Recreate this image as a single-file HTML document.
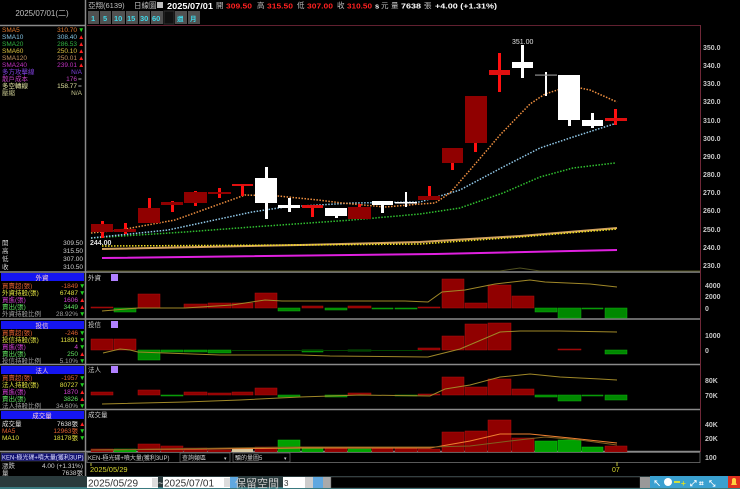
<!DOCTYPE html>
<html><head><meta charset="utf-8"><style>
html,body{margin:0;padding:0;background:#000;width:740px;height:489px;overflow:hidden}
svg{display:block}
text{font-family:"Liberation Sans","Noto Sans CJK TC",sans-serif}
</style></head><body>
<svg width="740" height="489" viewBox="0 0 740 489" xmlns="http://www.w3.org/2000/svg">
<rect width="740" height="489" fill="#000"/>
<line x1="85.5" y1="0" x2="85.5" y2="476" stroke="#8a8a8a" stroke-width="1.5"/>
<line x1="0" y1="25.5" x2="85" y2="25.5" stroke="#8a8a8a" stroke-width="1.5"/>
<text x="42" y="16" font-size="8" fill="#c0c0c0" text-anchor="middle">2025/07/01(二)</text>
<g font-size="6.5">
<text x="2" y="32" fill="#e07a30">SMA5</text><text x="77" y="32" fill="#e07a30" text-anchor="end">310.70</text><text x="78" y="32" fill="#20d020">▼</text>
<text x="2" y="39" fill="#80c0e0">SMA10</text><text x="77" y="39" fill="#80c0e0" text-anchor="end">308.40</text><text x="78" y="39" fill="#ff2020">▲</text>
<text x="2" y="46" fill="#30b040">SMA20</text><text x="77" y="46" fill="#30b040" text-anchor="end">286.53</text><text x="78" y="46" fill="#ff2020">▲</text>
<text x="2" y="53" fill="#d8c040">SMA60</text><text x="77" y="53" fill="#d8c040" text-anchor="end">250.10</text><text x="78" y="53" fill="#ff2020">▲</text>
<text x="2" y="60" fill="#c09060">SMA120</text><text x="77" y="60" fill="#c09060" text-anchor="end">250.01</text><text x="78" y="60" fill="#ff2020">▲</text>
<text x="2" y="67" fill="#c030c0">SMA240</text><text x="77" y="67" fill="#c030c0" text-anchor="end">239.01</text><text x="78" y="67" fill="#ff2020">▲</text>
<text x="2" y="74" fill="#8040e0">多方攻擊線</text><text x="82" y="74" fill="#8040e0" text-anchor="end">N/A</text>
<text x="2" y="81" fill="#c040c0">散戶成本</text><text x="77" y="81" fill="#c040c0" text-anchor="end">176</text><text x="78" y="81" fill="#aaa">=</text>
<text x="2" y="88" fill="#e0e0a0">多空轉線</text><text x="77" y="88" fill="#e0e0a0" text-anchor="end">158.77</text><text x="78" y="88" fill="#aaa">=</text>
<text x="2" y="95" fill="#c8c890">壓縮</text><text x="82" y="95" fill="#c8c890" text-anchor="end">N/A</text>
</g>
<g font-size="6.5" fill="#d0d0d0">
<text x="2" y="245">開</text><text x="83" y="245" text-anchor="end">309.50</text>
<text x="2" y="253">高</text><text x="83" y="253" text-anchor="end">315.50</text>
<text x="2" y="261">低</text><text x="83" y="261" text-anchor="end">307.00</text>
<text x="2" y="269">收</text><text x="83" y="269" text-anchor="end">310.50</text>
</g>
<g stroke="#8a8a8a" stroke-width="1.5">
<line x1="0" y1="272" x2="700" y2="272"/><line x1="0" y1="319" x2="700" y2="319"/>
<line x1="0" y1="364.5" x2="700" y2="364.5"/><line x1="0" y1="409.5" x2="700" y2="409.5"/>
<line x1="0" y1="451.5" x2="700" y2="451.5"/>
</g>
<g font-size="6.5">
<rect x="1" y="273" width="83" height="8" fill="#1515f0"/><text x="42" y="280" fill="#ffd0d0" text-anchor="middle">外資</text>
<text x="2" y="288" fill="#e06030">買賣超(張)</text><text x="78" y="288" fill="#e06030" text-anchor="end">-1849</text><text x="79" y="288" fill="#20d020">▼</text>
<text x="2" y="295" fill="#e0e040">外資持股(張)</text><text x="78" y="295" fill="#e0e040" text-anchor="end">67487</text><text x="79" y="295" fill="#20d020">▼</text>
<text x="2" y="302" fill="#d040d0">買進(張)</text><text x="78" y="302" fill="#d040d0" text-anchor="end">1606</text><text x="79" y="302" fill="#ff2020">▲</text>
<text x="2" y="309" fill="#60e060">賣出(張)</text><text x="78" y="309" fill="#60e060" text-anchor="end">3449</text><text x="79" y="309" fill="#ff2020">▲</text>
<text x="2" y="316" fill="#a0a0a0">外資持股比例</text><text x="78" y="316" fill="#a0a0a0" text-anchor="end">28.92%</text><text x="79" y="316" fill="#20d020">▼</text>
<rect x="1" y="321" width="83" height="8" fill="#1515f0"/><text x="42" y="328" fill="#ffd0d0" text-anchor="middle">投信</text>
<text x="2" y="335" fill="#e06030">買賣超(張)</text><text x="78" y="335" fill="#e06030" text-anchor="end">-246</text><text x="79" y="335" fill="#20d020">▼</text>
<text x="2" y="342" fill="#e0e040">投信持股(張)</text><text x="78" y="342" fill="#e0e040" text-anchor="end">11891</text><text x="79" y="342" fill="#20d020">▼</text>
<text x="2" y="349" fill="#d040d0">買進(張)</text><text x="78" y="349" fill="#d040d0" text-anchor="end">4</text><text x="79" y="349" fill="#20d020">▼</text>
<text x="2" y="356" fill="#60e060">賣出(張)</text><text x="78" y="356" fill="#60e060" text-anchor="end">250</text><text x="79" y="356" fill="#ff2020">▲</text>
<text x="2" y="363" fill="#a0a0a0">投信持股比例</text><text x="78" y="363" fill="#a0a0a0" text-anchor="end">5.10%</text><text x="79" y="363" fill="#20d020">▼</text>
<rect x="1" y="366" width="83" height="8" fill="#1515f0"/><text x="42" y="373" fill="#ffd0d0" text-anchor="middle">法人</text>
<text x="2" y="380" fill="#e06030">買賣超(張)</text><text x="78" y="380" fill="#e06030" text-anchor="end">-1957</text><text x="79" y="380" fill="#20d020">▼</text>
<text x="2" y="387" fill="#e0e040">法人持股(張)</text><text x="78" y="387" fill="#e0e040" text-anchor="end">80727</text><text x="79" y="387" fill="#20d020">▼</text>
<text x="2" y="394" fill="#d040d0">買進(張)</text><text x="78" y="394" fill="#d040d0" text-anchor="end">1870</text><text x="79" y="394" fill="#ff2020">▲</text>
<text x="2" y="401" fill="#60e060">賣出(張)</text><text x="78" y="401" fill="#60e060" text-anchor="end">3826</text><text x="79" y="401" fill="#ff2020">▲</text>
<text x="2" y="408" fill="#a0a0a0">法人持股比例</text><text x="78" y="408" fill="#a0a0a0" text-anchor="end">34.60%</text><text x="79" y="408" fill="#20d020">▼</text>
<rect x="1" y="411" width="83" height="8" fill="#1515f0"/><text x="42" y="418" fill="#ffd0d0" text-anchor="middle">成交量</text>
<text x="2" y="426" fill="#e0e0e0">成交量</text><text x="78" y="426" fill="#e0e0e0" text-anchor="end">7638張</text><text x="79" y="426" fill="#ff2020">▲</text>
<text x="2" y="433" fill="#e06030">MA5</text><text x="78" y="433" fill="#e06030" text-anchor="end">12963張</text><text x="79" y="433" fill="#20d020">▼</text>
<text x="2" y="440" fill="#e0e040">MA10</text><text x="78" y="440" fill="#e0e040" text-anchor="end">18178張</text><text x="79" y="440" fill="#20d020">▼</text>
<rect x="1" y="453" width="83" height="8" fill="#101070" stroke="#606060" stroke-width="0.5"/><text x="2" y="459.5" fill="#e0e0ff" font-size="6">KEN-極光碟+噴大量(獲利3UP)</text>
<text x="2" y="468" fill="#d0d0d0">漲跌</text><text x="83" y="468" fill="#d0d0d0" text-anchor="end">4.00 (+1.31%)</text>
<text x="2" y="475" fill="#d0d0d0">量</text><text x="83" y="475" fill="#d0d0d0" text-anchor="end">7638張</text>
</g>
<g font-size="7.5">
<text x="88" y="8" fill="#c0c0c0">亞翔(6139)</text>
<text x="134" y="8" fill="#c0c0c0">日線圖</text>
<rect x="157" y="2" width="6" height="6" fill="#c0c0c0"/>
<text x="167" y="9" fill="#fff" font-weight="bold" font-size="8.5" textLength="46" lengthAdjust="spacingAndGlyphs">2025/07/01</text>
<text x="216" y="8" fill="#c0c0c0">開</text><text x="226" y="8.5" fill="#ff2020" font-weight="bold" textLength="26" lengthAdjust="spacingAndGlyphs">309.50</text>
<text x="257" y="8" fill="#c0c0c0">高</text><text x="267" y="8.5" fill="#ff2020" font-weight="bold" textLength="26" lengthAdjust="spacingAndGlyphs">315.50</text>
<text x="297" y="8" fill="#c0c0c0">低</text><text x="307" y="8.5" fill="#ff2020" font-weight="bold" textLength="26" lengthAdjust="spacingAndGlyphs">307.00</text>
<text x="337" y="8" fill="#c0c0c0">收</text><text x="347" y="8.5" fill="#ff2020" font-weight="bold" textLength="25" lengthAdjust="spacingAndGlyphs">310.50</text>
<text x="375" y="8.5" fill="#fff" font-weight="bold">s</text><text x="381" y="8" fill="#c0c0c0">元</text>
<text x="391" y="8" fill="#c0c0c0">量</text><text x="401" y="8.5" fill="#fff" font-weight="bold" textLength="20" lengthAdjust="spacingAndGlyphs">7638</text><text x="424" y="8" fill="#c0c0c0">張</text>
<text x="435" y="8.5" fill="#fff" font-weight="bold" textLength="62" lengthAdjust="spacingAndGlyphs">+4.00 (+1.31%)</text>
</g>
<g font-size="7.5" fill="#40d8e8" font-weight="bold">
<rect x="88" y="11" width="11" height="13" fill="#505050"/><text x="91" y="21">1</text>
<rect x="100" y="11" width="11" height="13" fill="#505050"/><text x="103" y="21">5</text>
<rect x="112" y="11" width="13" height="13" fill="#505050"/><text x="114" y="21">10</text>
<rect x="126" y="11" width="12" height="13" fill="#505050"/><text x="127" y="21">15</text>
<rect x="139" y="11" width="11" height="13" fill="#505050"/><text x="140" y="21">30</text>
<rect x="151" y="11" width="12" height="13" fill="#505050"/><text x="152" y="21">60</text>
<rect x="164" y="11" width="10" height="13" fill="#101010" stroke="#303030"/>
<rect x="175" y="11" width="12" height="13" fill="#505050"/><text x="177" y="21" font-size="6.5">週</text>
<rect x="188" y="11" width="12" height="13" fill="#505050"/><text x="190" y="21" font-size="6.5">月</text>
</g>
<line x1="87" y1="25.5" x2="700" y2="25.5" stroke="#602030"/>
<line x1="700.5" y1="25" x2="700.5" y2="452" stroke="#702838"/>
<g font-size="7" fill="#c8c8c8" font-weight="bold">
<text x="703" y="50">350.0</text><text x="703" y="68">340.0</text><text x="703" y="86">330.0</text><text x="703" y="104">320.0</text><text x="703" y="123">310.0</text><text x="703" y="141">300.0</text><text x="703" y="159">290.0</text><text x="703" y="177">280.0</text><text x="703" y="195">270.0</text><text x="703" y="213">260.0</text><text x="703" y="232">250.0</text><text x="703" y="250">240.0</text><text x="703" y="268">230.0</text>
<text x="705" y="288">4000</text><text x="705" y="299">2000</text><text x="705" y="311">0</text>
<text x="705" y="338">1000</text><text x="705" y="353">0</text>
<text x="705" y="383">80K</text><text x="705" y="398">70K</text>
<text x="705" y="427">40K</text><text x="705" y="441">20K</text><text x="705" y="460">100</text>
</g>
<g fill="none">
<polyline points="102,258 435,254 617,250" stroke="#e020e0" stroke-width="2"/>
<polyline points="102,249 300,245 420,242 520,236 617,228" stroke="#d0a060" stroke-width="2"/>
<polyline points="102,246 300,245 420,244 520,237 617,229" stroke="#f0e020" stroke-width="1.5" stroke-dasharray="1.5 1.5"/>
<polyline points="91,238 185,232 252,227 352,220 420,214 460,208 503,193 540,177 573,168 615,163" stroke="#30c030" stroke-width="1.5" stroke-dasharray="1.5 1.5"/>
<polyline points="91,238 168,230 252,212 285,207 352,203 420,202 460,190 503,167 540,148 570,138 617,123" stroke="#90c8e8" stroke-width="1.5" stroke-dasharray="1.5 1.5"/>
<polyline points="91,233 120,230 175,220 245,195 278,196 318,200 342,203 385,207 420,204 435,203 450,193 470,170 500,135 530,104 545,94 570,86 590,90 617,102" stroke="#f09040" stroke-width="1.5" stroke-dasharray="1.5 1.5"/>
<polyline points="87,271 500,271 520,268 540,271 700,271" stroke="#505020" stroke-width="1"/>
</g>
<text x="90" y="245" font-size="7" fill="#e0e0e0" font-weight="bold">244.00</text>
<text x="512" y="44" font-size="7" fill="#e0e0e0">351.00</text>
<g>
<g fill="#ff1010">
<rect x="101" y="221" width="3" height="17"/><rect x="124" y="223" width="3" height="11"/><rect x="148" y="198" width="3" height="25"/><rect x="171" y="201" width="3" height="11"/><rect x="194" y="191" width="3" height="15"/><rect x="218" y="188" width="3" height="10"/><rect x="241" y="184" width="3" height="12"/><rect x="311" y="205" width="3" height="12"/><rect x="358" y="204" width="3" height="15"/><rect x="428" y="186" width="3" height="14"/><rect x="451" y="148" width="3" height="22"/><rect x="474" y="96" width="3" height="56"/><rect x="498" y="53" width="3" height="39"/><rect x="614" y="109" width="3" height="16"/>
</g>
<g fill="#900000">
<rect x="91" y="224" width="22" height="8"/><rect x="114" y="229" width="22" height="3"/><rect x="138" y="208" width="22" height="15"/><rect x="161" y="202" width="22" height="3"/><rect x="184" y="192" width="23" height="11"/><rect x="208" y="192" width="23" height="2"/><rect x="348" y="207" width="23" height="12"/><rect x="418" y="196" width="22" height="4"/><rect x="442" y="148" width="21" height="15"/><rect x="465" y="96" width="22" height="47"/>
</g>
<g fill="#e01010"><rect x="232" y="184" width="21" height="2"/><rect x="302" y="205" width="21" height="3"/><rect x="489" y="70" width="21" height="5"/><rect x="605" y="118" width="22" height="3"/></g>
<g fill="#ffffff">
<rect x="265" y="167" width="3" height="52"/><rect x="255" y="178" width="22" height="25"/>
<rect x="288" y="198" width="3" height="14"/><rect x="278" y="205" width="22" height="3"/>
<rect x="335" y="208" width="3" height="10"/><rect x="325" y="208" width="22" height="8"/>
<rect x="381" y="201" width="3" height="12"/><rect x="372" y="201" width="21" height="4"/>
<rect x="405" y="192" width="2" height="15"/><rect x="395" y="202" width="22" height="1.5"/>
<rect x="521" y="45" width="3" height="33"/><rect x="512" y="62" width="21" height="6"/>
<rect x="545" y="72" width="2" height="24"/>
<rect x="568" y="75" width="3" height="51"/><rect x="558" y="75" width="22" height="45"/>
<rect x="591" y="113" width="3" height="15"/><rect x="582" y="120" width="21" height="6"/>
</g>
<rect x="535" y="74.5" width="22" height="1.2" fill="#909090"/>
</g>
<g font-size="6.5" fill="#d0d0d0">
<text x="88" y="280">外資</text><rect x="111" y="274" width="7" height="7" fill="#b080ff"/>
<text x="88" y="327">投信</text><rect x="111" y="321" width="7" height="7" fill="#b080ff"/>
<text x="88" y="372">法人</text><rect x="111" y="366" width="7" height="7" fill="#b080ff"/>
<text x="88" y="417">成交量</text>
</g>
<g fill="#900000" stroke="#b01010" stroke-width="0.5">
<rect x="91" y="307" width="22" height="1"/><rect x="138" y="294" width="22" height="14"/><rect x="184" y="304" width="23" height="4"/><rect x="208" y="303" width="23" height="5"/><rect x="232" y="303" width="21" height="5"/><rect x="255" y="293" width="22" height="15"/><rect x="302" y="306" width="21" height="2"/><rect x="348" y="306" width="23" height="2"/><rect x="418" y="307" width="22" height="1"/><rect x="442" y="279" width="22" height="29"/><rect x="465" y="303" width="22" height="5"/><rect x="488" y="285" width="23" height="23"/><rect x="512" y="296" width="22" height="12"/>
</g>
<g fill="#008800" stroke="#10b010" stroke-width="0.5">
<rect x="114" y="308" width="22" height="4"/><rect x="278" y="308" width="22" height="3"/><rect x="325" y="308" width="22" height="2"/><rect x="372" y="308" width="21" height="1"/><rect x="395" y="308" width="22" height="1"/><rect x="535" y="308" width="22" height="4"/><rect x="558" y="308" width="23" height="10"/><rect x="582" y="308" width="21" height="1"/><rect x="605" y="308" width="22" height="10"/>
</g>
<polyline fill="none" stroke="#a08828" stroke-width="1" points="102,311 138,308 185,308 232,305 265,300 282,301 405,301 428,302 442,292 465,290 495,284 530,280 545,282 590,284 617,287"/>
<g fill="#900000" stroke="#b01010" stroke-width="0.5">
<rect x="91" y="339" width="22" height="11"/><rect x="114" y="339" width="22" height="11"/><rect x="418" y="348" width="22" height="2"/><rect x="442" y="336" width="22" height="14"/><rect x="465" y="324" width="22" height="26"/><rect x="488" y="323" width="23" height="27"/><rect x="558" y="349" width="23" height="1"/>
</g>
<g fill="#008800" stroke="#10b010" stroke-width="0.5">
<rect x="138" y="350" width="22" height="10"/><rect x="161" y="350" width="22" height="2"/><rect x="184" y="350" width="23" height="2"/><rect x="208" y="350" width="23" height="3"/><rect x="302" y="350" width="21" height="2"/><rect x="348" y="350" width="23" height="1"/><rect x="605" y="350" width="22" height="4"/>
</g>
<g fill="#004400"><rect x="232" y="350" width="190" height="1"/></g>
<polyline fill="none" stroke="#a08828" stroke-width="1" points="103,353 120,349 130,350 138,352 165,353 220,355 300,355 330,356 428,357 460,349 500,332 520,331 560,331 617,332"/>
<g fill="#900000" stroke="#b01010" stroke-width="0.5">
<rect x="91" y="392" width="22" height="3"/><rect x="138" y="390" width="22" height="5"/><rect x="184" y="392" width="23" height="3"/><rect x="208" y="393" width="23" height="2"/><rect x="232" y="392" width="21" height="3"/><rect x="255" y="388" width="22" height="7"/><rect x="348" y="393" width="23" height="2"/><rect x="418" y="394" width="22" height="1"/><rect x="442" y="377" width="22" height="18"/><rect x="465" y="387" width="22" height="8"/><rect x="488" y="379" width="23" height="16"/><rect x="512" y="389" width="22" height="6"/>
</g>
<g fill="#008800" stroke="#10b010" stroke-width="0.5">
<rect x="161" y="395" width="22" height="1"/><rect x="278" y="395" width="22" height="2"/><rect x="325" y="395" width="22" height="2"/><rect x="395" y="395" width="22" height="1"/><rect x="535" y="395" width="22" height="2"/><rect x="558" y="395" width="23" height="6"/><rect x="582" y="395" width="21" height="1"/><rect x="605" y="395" width="22" height="5"/>
</g>
<polyline fill="none" stroke="#a08828" stroke-width="1" points="102,404 185,402 240,400 300,397 360,395 430,396 445,389 470,385 500,377 530,374 560,377 600,379 617,380"/>
<g fill="#900000" stroke="#b01010" stroke-width="0.5">
<rect x="91" y="449" width="22" height="3"/><rect x="138" y="444" width="22" height="8"/><rect x="161" y="446" width="22" height="6"/><rect x="184" y="448" width="23" height="4"/><rect x="208" y="450" width="23" height="2"/><rect x="255" y="447" width="22" height="5"/><rect x="325" y="448" width="22" height="4"/><rect x="372" y="448" width="21" height="4"/><rect x="395" y="448" width="22" height="4"/><rect x="418" y="449" width="22" height="3"/><rect x="442" y="432" width="22" height="20"/><rect x="465" y="431" width="22" height="21"/><rect x="488" y="420" width="23" height="32"/><rect x="512" y="438" width="22" height="14"/><rect x="605" y="446" width="22" height="6"/>
</g>
<g fill="#00a000" stroke="#10c010" stroke-width="0.5">
<rect x="114" y="449" width="22" height="3"/><rect x="278" y="440" width="22" height="12"/><rect x="302" y="447" width="21" height="5"/><rect x="348" y="449" width="23" height="3"/><rect x="535" y="441" width="22" height="11"/><rect x="558" y="440" width="23" height="12"/><rect x="582" y="447" width="21" height="5"/>
</g>
<rect x="232" y="448" width="21" height="4" fill="#d8c8a0"/>
<polyline fill="none" stroke="#f08030" stroke-width="1" points="91,450 200,449 300,448 430,448 470,441 500,434 530,434 570,438 617,443"/>
<polyline fill="none" stroke="#806020" stroke-width="1" points="91,450 300,447 430,447 470,446 510,441 545,437 580,440 617,445"/>
<rect x="87" y="452.5" width="613" height="10" fill="#000" stroke="#707070" stroke-width="0.8"/>
<text x="88" y="460" font-size="6" fill="#d0d0d0">KEN-極光碟+噴大量(獲利3UP)</text>
<rect x="180" y="453" width="50" height="9" fill="#000" stroke="#808080" stroke-width="0.6"/><text x="182" y="460" font-size="6" fill="#d0d0d0">查詢類區</text><text x="224" y="460" font-size="5" fill="#d0d0d0">▾</text>
<rect x="233" y="453" width="57" height="9" fill="#000" stroke="#808080" stroke-width="0.6"/><text x="235" y="460" font-size="6" fill="#d0d0d0">騙的量圖5</text><text x="284" y="460" font-size="5" fill="#d0d0d0">▾</text>
<line x1="91" y1="463" x2="91" y2="466" stroke="#c0c040"/>
<text x="90" y="472" font-size="7.5" fill="#d8d830">2025/05/29</text>
<line x1="617" y1="462" x2="617" y2="466" stroke="#c0c040"/>
<text x="612" y="472" font-size="7" fill="#d8d830">07</text>
<rect x="0" y="476" width="740" height="13" fill="#2a3a3c"/>
<rect x="0" y="487" width="740" height="2" fill="#3a7a80"/>
<rect x="87" y="477" width="71" height="11" fill="#fff"/><text x="88" y="486.5" font-size="10" fill="#333">2025/05/29</text><rect x="152" y="478" width="6" height="9" fill="#ddd"/>
<text x="158" y="486" font-size="9" fill="#ddd">~</text>
<rect x="163" y="477" width="67" height="11" fill="#fff"/><text x="164" y="486.5" font-size="10" fill="#333">2025/07/01</text><rect x="224" y="478" width="6" height="9" fill="#ddd"/>
<rect x="230" y="477" width="8" height="11" fill="#60a8e0"/>
<text x="235" y="487" font-size="11" fill="#c8c8c8">保留空間</text>
<rect x="283" y="477" width="22" height="11" fill="#fff"/><text x="284" y="486" font-size="8" fill="#333">3</text><rect x="305" y="477" width="8" height="11" fill="#ccc"/>
<rect x="313" y="477" width="10" height="11" fill="#60a8e0"/>
<rect x="323" y="477" width="8" height="11" fill="#aaa"/>
<rect x="331" y="477" width="309" height="11" fill="#000" stroke="#555" stroke-width="0.5"/>
<rect x="640" y="477" width="10" height="11" fill="#999"/>
<rect x="650" y="476" width="78" height="12" fill="#3aa0d0"/>
<g font-size="8" fill="#fff" font-weight="bold">
<text x="653" y="486">↖</text><circle cx="668" cy="482" r="4" fill="#fff"/><rect x="674" y="481" width="6" height="2" fill="#d0e040"/><text x="681" y="486" fill="#e0e020">+</text><text x="690" y="486">⤢</text><text x="699" y="486">⌗</text><text x="709" y="486">⤡</text>
</g>
<rect x="728" y="476" width="12" height="12" fill="#e03020"/><path d="M731 485 h6 l-1 -2 v-3 a2 2 0 0 0 -4 0 v3z" fill="#ffd040"/>
</svg>
</body></html>
